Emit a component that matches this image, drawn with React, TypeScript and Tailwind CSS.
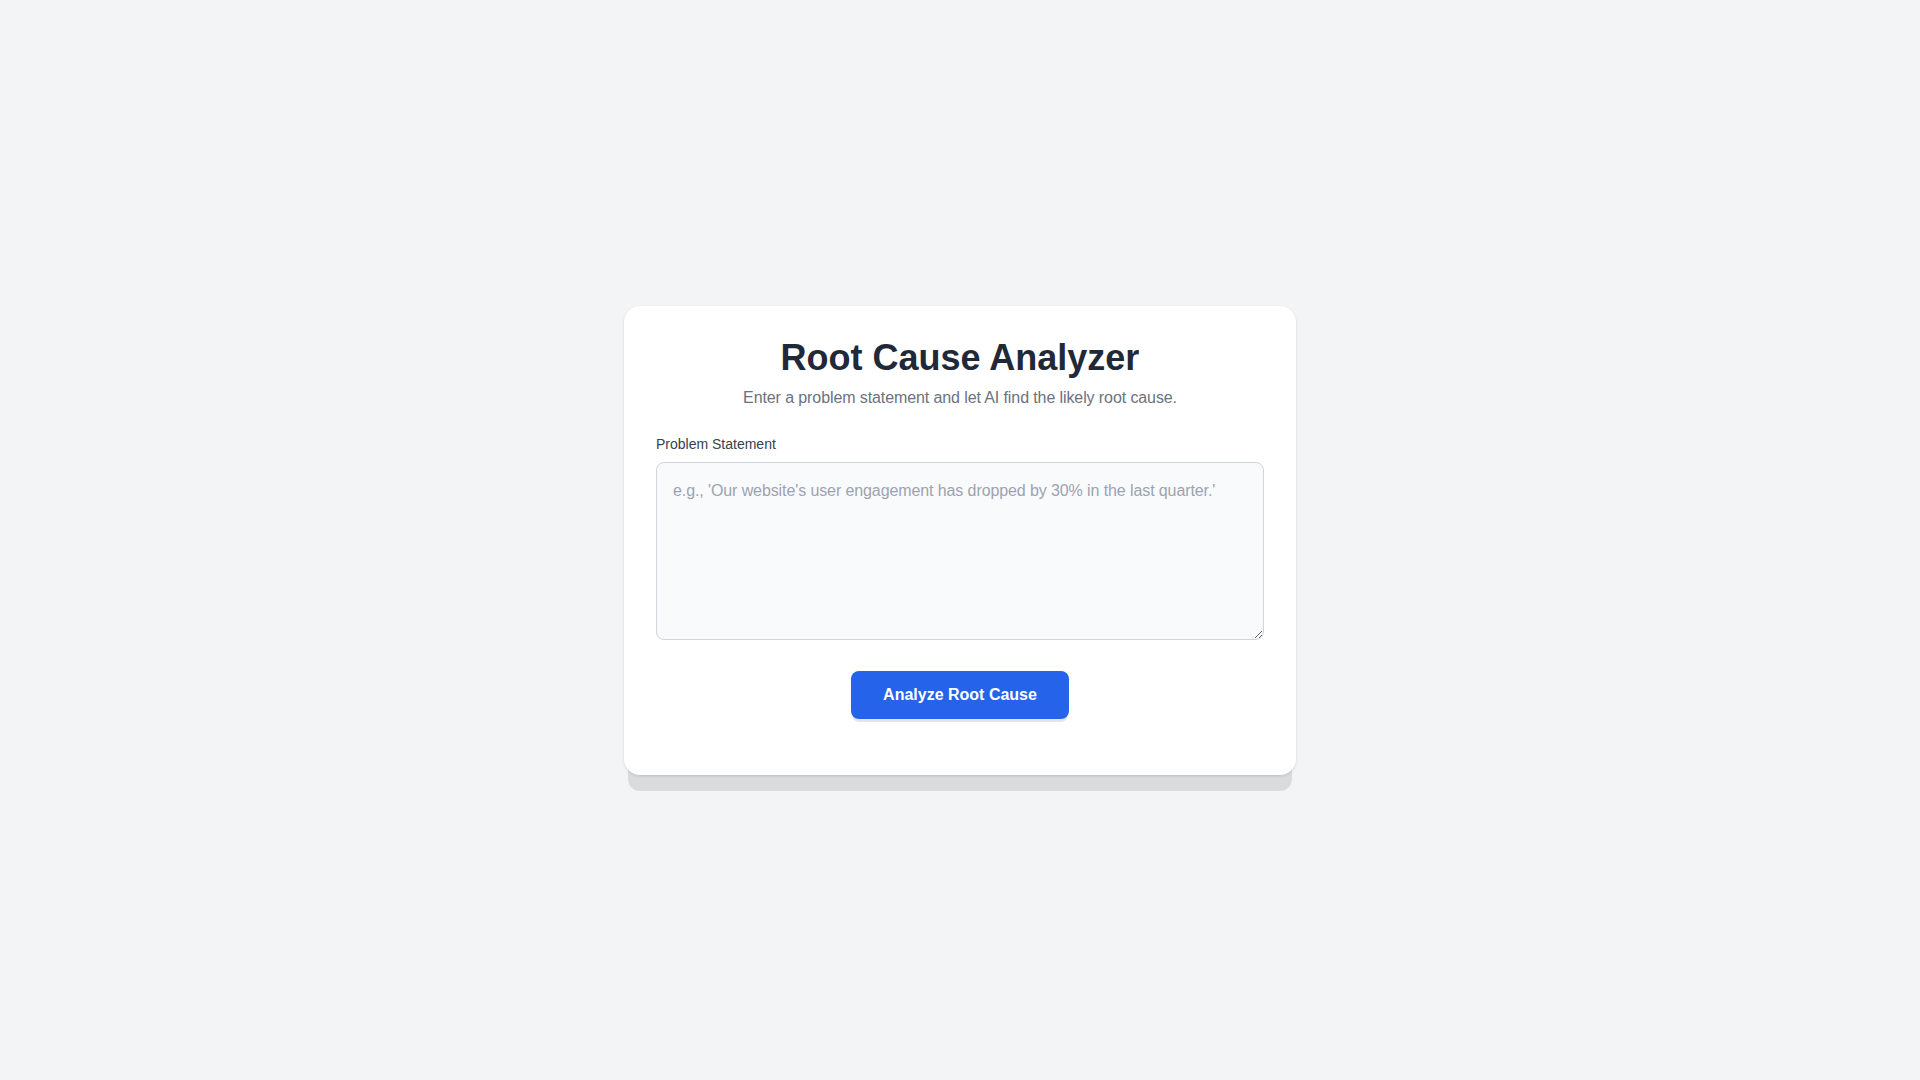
function App() {
  return (
    <div className="min-h-screen bg-[#f3f4f6] flex items-center justify-center font-['Liberation_Sans',Arial,sans-serif]">
      <main className="w-full max-w-2xl bg-white rounded-2xl p-8 shadow-[0_1px_3px_rgba(0,0,0,0.12),0_20px_0_-4px_rgba(0,0,0,0.1)]">
        {/* Header */}
        <header className="text-center mb-6">
          <h1 className="text-4xl font-bold text-[#1f2937]">Root Cause Analyzer</h1>
          <p className="mt-2 text-[#6b7280] tracking-[-0.1px]">
            Enter a problem statement and let AI find the likely root cause.
          </p>
        </header>

        {/* Input */}
        <label htmlFor="problem" className="block mb-2 text-sm text-[#374151]">
          Problem Statement
        </label>
        <textarea
          id="problem"
          rows={6}
          className="block w-full p-4 text-base tracking-[-0.1px] text-[#1f2937] bg-[#f9fafb] border border-[#d1d5db] rounded-lg placeholder:text-[#9ca3af] outline-none"
          placeholder="e.g., 'Our website's user engagement has dropped by 30% in the last quarter.'"
        />

        <div className="mt-[31px] mb-6 flex justify-center">
          <button className="px-8 py-3 rounded-lg bg-[#2563eb] text-white font-bold shadow-[0_4px_0_-1px_rgba(0,0,0,0.1)]">
            Analyze Root Cause
          </button>
        </div>
      </main>
    </div>
  );
}

export default App;
